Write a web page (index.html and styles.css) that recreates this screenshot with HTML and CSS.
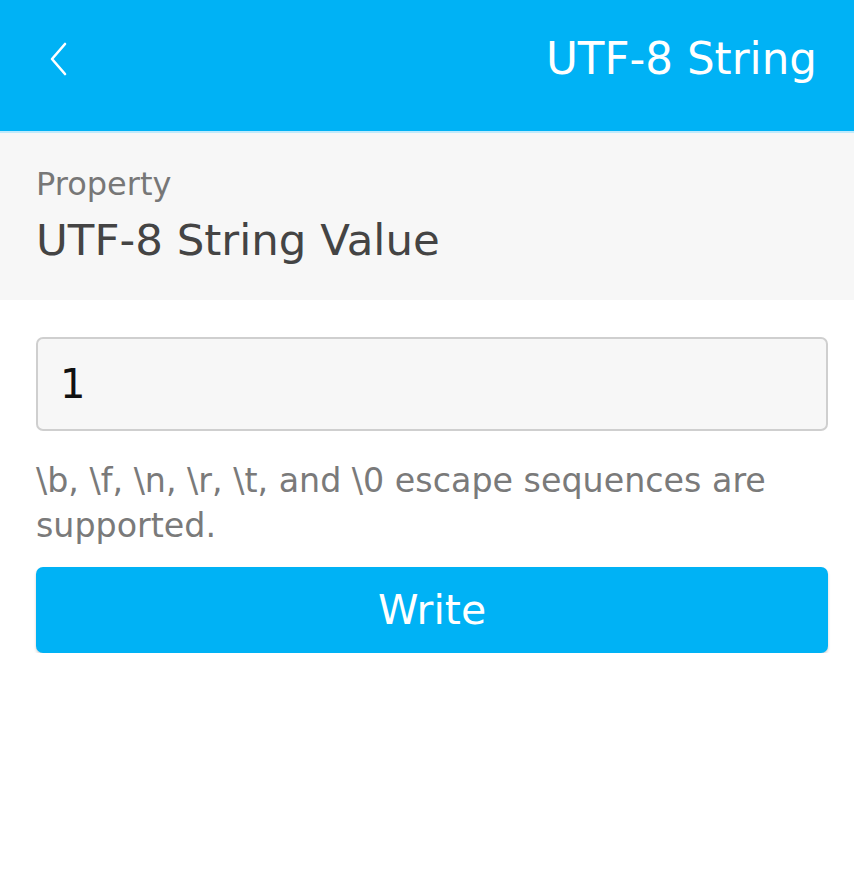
FILE: index.html
```html
<!DOCTYPE html>
<html>
<head>
<meta charset="utf-8">
<link rel="stylesheet" href="styles.css">
</head>
<body>
<header class="appbar">
  <button class="back" aria-label="Back">
    <svg width="20" height="34" viewBox="0 0 20 34"><path d="M17 2 L4 17 L17 32" fill="none" stroke="#fff" stroke-width="2.6" stroke-linecap="round" stroke-linejoin="round"/></svg>
  </button>
  <h1 class="title">UTF-8 String</h1>
</header>
<section class="prop">
  <div class="prop-label">Property</div>
  <div class="prop-value">UTF-8 String Value</div>
</section>
<main class="form">
  <div class="field">1</div>
  <p class="hint">\b, \f, \n, \r, \t, and \0 escape sequences are supported.</p>
  <button class="write">Write</button>
</main>
</body>
</html>
```
FILE: styles.css
```css
* { box-sizing: border-box; }
html, body { margin: 0; padding: 0; background: #fff; }
body { font-family: "DejaVu Sans", "Open Sans", sans-serif; width: 854px; }
.appbar {
  height: 133px;
  background: #00b2f5;
  border-bottom: 2px solid #bfeafc;
  display: flex;
  align-items: center;
  justify-content: space-between;
  padding: 0 37px 14px 48px;
}
.back { background: none; border: 0; padding: 0; display: flex; }
.title {
  margin: 0;
  color: #fff;
  font-weight: 400;
  font-size: 43.6px;
  line-height: 50px;
}
.prop {
  background: #f7f7f7;
  height: 167px;
  padding: 28px 36px 0;
}
.prop-label { color: #777; font-size: 32px; line-height: 46px; }
.prop-value { color: #444; font-size: 43.5px; line-height: 56px; margin-top: 5px; }
.form { padding: 37px 26px 0 36px; }
.field {
  height: 94px;
  border: 2px solid #cfcfcf;
  border-radius: 7px;
  background: #f7f7f7;
  color: #111;
  font-size: 40px;
  display: flex;
  align-items: center;
  padding-left: 22px;
}
.hint {
  margin: 27px 0 19px;
  color: #7a7a7a;
  font-size: 33.3px;
  line-height: 45px;
}
.write {
  width: 100%;
  height: 86px;
  border: 0;
  border-radius: 7px;
  background: #00b2f5;
  color: #fff;
  font-family: inherit;
  font-size: 41px;
  padding: 0;
  display: flex;
  align-items: center;
  justify-content: center;
  box-shadow: 0 2px 3px rgba(0,0,0,0.18);
}
```
